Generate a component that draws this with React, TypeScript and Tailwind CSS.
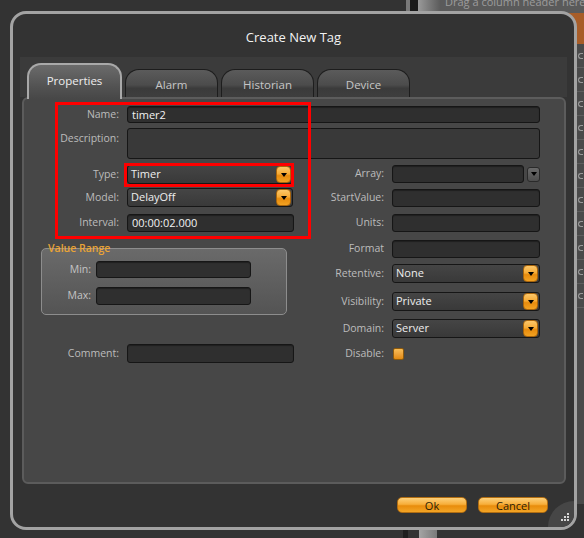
import type { ReactNode } from 'react';

const Arrow = () => (
  <span className="block h-0 w-0 border-x-[3px] border-t-[4px] border-x-transparent border-t-black" />
);

const OrangeButton = () => (
  <span className="flex h-[17px] w-[15px] shrink-0 items-center justify-center rounded-[4px] border border-[#a9650c] bg-[linear-gradient(to_bottom,#fcc76a_0%,#f6ab36_45%,#e78b0d_58%,#f2a222_100%)]">
    <Arrow />
  </span>
);

const Input = ({ value, className }: { value?: string; className: string }) => (
  <div
    className={`shrink-0 rounded-[3px] border border-[#161616] bg-[#2f2f2f] pl-[4px] text-[11px] leading-[15px] text-[#f2f2f2] shadow-[inset_0_1px_1px_rgba(0,0,0,0.35)] ${className}`}
  >
    {value}
  </div>
);

const Select = ({ value, className }: { value: string; className: string }) => (
  <div
    className={`flex shrink-0 items-center justify-between rounded-[3px] border border-[#161616] bg-linear-to-b from-[#454545] to-[#393939] pl-[3px] pr-px text-[11px] text-[#eeeeee] ${className}`}
  >
    <span>{value}</span>
    <OrangeButton />
  </div>
);

interface RowProps {
  label: string;
  labelW: string;
  className?: string;
  children: ReactNode;
}

const Row = ({ label, labelW, className = '', children }: RowProps) => (
  <div className={`flex items-center ${className}`}>
    <span className={`${labelW} shrink-0 pr-[8px] text-right text-[10.5px] text-[#bcbcbc]`}>{label}</span>
    {children}
  </div>
);

const Tab = ({ label }: { label: string }) => (
  <div className="flex h-[28px] w-[93px] items-center justify-center rounded-t-[14px] border-[1.5px] border-b-0 border-[#1d1d1d] bg-[linear-gradient(to_bottom,#5b5b5b,#4c4c4c_55%,#3b3b3b_68%,#3e3e3e)] pt-[2px] text-[11.5px] text-[#c6c6c6]">
    {label}
  </div>
);

const L = 'w-[103px]';
const R = 'w-[96px]';

export default function App() {
  return (
    <div className="relative h-[538px] w-[584px] overflow-hidden bg-[#333333] [font-family:'Open_Sans',sans-serif]">
      {/* app behind the dialog */}
      <div className="absolute left-[406px] top-0 flex h-[14px]">
        <div className="w-[4px] bg-[#7a7a7a]" />
        <div className="w-[8px] bg-[#1b1b1b]" />
        <div className="w-[22px] bg-linear-to-r from-[#9a9a9a] to-[#5c5c5c]" />
        <div className="w-[144px] overflow-hidden bg-[#5a5a5a] pl-[5px] text-[11px] leading-[14px] text-[#9c9c9c]">
          <span className="-mt-[5px] block whitespace-nowrap">Drag a column header here</span>
        </div>
      </div>
      <div className="absolute left-[556px] top-[13px] h-[31px] w-[28px] bg-[#a85d28]" />
      <div className="absolute left-[576px] top-[44px] flex h-[460px] w-[8px] flex-col bg-[#4a4a4a]">
        {Array.from({ length: 11 }).map((_, i) => (
          <span key={i} className="flex h-[24px] items-center border-b border-[#5e5e5e] pl-[2px]">
            <span className="h-[6px] w-[5px] rounded-l-full border-[1.5px] border-r-0 border-[#9a9a9a]" />
          </span>
        ))}
      </div>
      <div className="absolute left-[403px] top-[530px] flex h-[8px]">
        <div className="w-[5px] bg-[#1f1f1f]" />
        <div className="w-[11px] bg-[#333333]" />
        <div className="w-[18px] bg-linear-to-r from-[#a5a5a5] to-[#7a7a7a]" />
      </div>

      {/* dialog */}
      <div className="absolute left-[10px] top-[11px] flex h-[519px] w-[567px] flex-col overflow-hidden rounded-[16px] border-[3px] border-[#a3a3a3] bg-[#333333]">
        <div className="flex h-[43px] shrink-0 justify-center pt-[14px] text-[13px] leading-[18px] text-[#f2f2f2]">
          Create New Tag
        </div>

        <div className="mx-[7px] flex flex-col">
          <div className="flex h-[40px] items-end gap-[3px] bg-[#3b3b3b] pl-[7px]">
            <div className="relative z-10 -mb-[2px] flex h-[36px] w-[95px] items-center justify-center rounded-t-[14px] border-2 border-b-0 border-[#a9a9a9] bg-[linear-gradient(to_bottom,#6b6b6b,#525252_65%,#474747)] pb-[2px] text-[11.5px] text-[#eeeeee]">
              Properties
            </div>
            <Tab label="Alarm" />
            <Tab label="Historian" />
            <Tab label="Device" />
          </div>

          <div className="ml-[2px] mr-px flex h-[387px] flex-col rounded-[6px] border-2 border-[#5c5c5c] bg-[#474747] pt-[7px]">
            <Row label="Name:" labelW={L} className="h-[17px]">
              <Input value="timer2" className="h-[17px] w-[413px]" />
            </Row>
            <div className="mt-[5px] flex items-start">
              <span className={`${L} shrink-0 pr-[8px] pt-[3px] text-right text-[10.5px] text-[#bcbcbc]`}>Description:</span>
              <div className="h-[31px] w-[413px] rounded-[3px] border border-[#161616] bg-[#393939]" />
            </div>

            <div className="mt-[6px] flex">
              <div className="flex w-[272px] flex-col">
                <Row label="Type:" labelW={L} className="h-[19px]">
                  <Select value="Timer" className="h-[19px] w-[166px]" />
                </Row>
                <Row label="Model:" labelW={L} className="mt-[4px] h-[19px]">
                  <Select value="DelayOff" className="h-[19px] w-[166px]" />
                </Row>
                <Row label="Interval:" labelW={L} className="mt-[7px] h-[18px]">
                  <Input value="00:00:02.000" className="h-[18px] w-[167px]" />
                </Row>

                <div className="relative ml-[17px] mt-[16px] h-[67px] w-[246px] rounded-[5px] border-[1.5px] border-[#8d8d8d] bg-linear-to-b from-[#6a6a6a] to-[#545454] pt-[12px]">
                  <span className="absolute -top-[8px] left-[6px] text-[10.5px] font-semibold leading-[14px] text-[#eaa435]">
                    Value Range
                  </span>
                  <div className="flex h-[17px] items-center">
                    <span className="w-[54px] shrink-0 pr-[5px] text-right text-[10.5px] text-[#c4c4c4]">Min:</span>
                    <Input className="h-[17px] w-[155px]" />
                  </div>
                  <div className="mt-[9px] flex h-[18px] items-center">
                    <span className="w-[54px] shrink-0 pr-[5px] text-right text-[10.5px] text-[#c4c4c4]">Max:</span>
                    <Input className="h-[18px] w-[155px]" />
                  </div>
                </div>

                <Row label="Comment:" labelW={L} className="mt-[29px] h-[19px]">
                  <Input className="h-[19px] w-[167px]" />
                </Row>
              </div>

              <div className="flex flex-col">
                <Row label="Array:" labelW={R} className="h-[18px]">
                  <Input className="h-[18px] w-[132px]" />
                  <span className="ml-[3px] flex h-[15px] w-[13px] items-center justify-center rounded-[3px] border border-[#2a2a2a] bg-linear-to-b from-[#6a6a6a] to-[#4e4e4e]">
                    <Arrow />
                  </span>
                </Row>
                <Row label="StartValue:" labelW={R} className="mt-[6px] h-[18px]">
                  <Input className="h-[18px] w-[148px]" />
                </Row>
                <Row label="Units:" labelW={R} className="mt-[7px] h-[18px]">
                  <Input className="h-[18px] w-[148px]" />
                </Row>
                <Row label="Format" labelW={R} className="mt-[8px] h-[18px]">
                  <Input className="h-[18px] w-[148px]" />
                </Row>
                <Row label="Retentive:" labelW={R} className="mt-[6px] h-[19px]">
                  <Select value="None" className="h-[19px] w-[148px]" />
                </Row>
                <Row label="Visibility:" labelW={R} className="mt-[9px] h-[19px]">
                  <Select value="Private" className="h-[19px] w-[148px]" />
                </Row>
                <Row label="Domain:" labelW={R} className="mt-[8px] h-[19px]">
                  <Select value="Server" className="h-[19px] w-[148px]" />
                </Row>
                <Row label="Disable:" labelW={R} className="mt-[10px] h-[12px]">
                  <span className="ml-px block h-[12px] w-[11px] rounded-[2px] border border-[#8e5a0c] bg-linear-to-b from-[#f9bd56] to-[#e18a0e]" />
                </Row>
              </div>
            </div>
          </div>
        </div>

        <div className="mt-[13px] flex justify-end gap-[11px] pr-[26px]">
          {['Ok', 'Cancel'].map((b) => (
            <button
              key={b}
              className="flex h-[16px] w-[70px] items-center justify-center rounded-[5px] border border-[#b06d12] bg-[linear-gradient(to_bottom,#fdd07a_0%,#f7ae3a_45%,#e88c0c_56%,#f3a526_100%)] text-[11px] leading-none text-[#2b1d06]"
            >
              {b}
            </button>
          ))}
        </div>

        <div className="absolute bottom-0 right-0 h-[26px] w-[26px] rounded-tl-full bg-[#464646]">
          <div className="absolute bottom-[6px] right-[5px] grid grid-cols-3 gap-px">
            {[0, 0, 1, 0, 1, 1, 1, 1, 1].map((d, i) => (
              <span key={i} className={`h-[2px] w-[2px] ${d ? 'bg-[#d6d6d6]' : 'bg-transparent'}`} />
            ))}
          </div>
        </div>
      </div>

      {/* red annotations */}
      <div className="pointer-events-none absolute left-[55px] top-[102px] z-20 h-[137px] w-[256px] border-[3px] border-[#ff0000]" />
      <div className="pointer-events-none absolute left-[124px] top-[163px] z-20 h-[24px] w-[170px] border-[3px] border-[#ff0000]" />
    </div>
  );
}
